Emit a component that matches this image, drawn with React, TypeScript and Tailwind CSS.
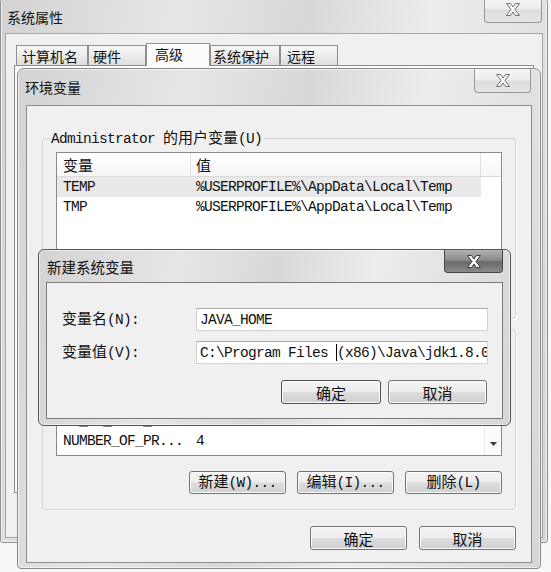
import React from "react";

const CJK = "font-['Noto_Sans_CJK_SC',sans-serif] text-[15px] leading-[13px]";
const LAT = "font-['Liberation_Mono','Noto_Sans_CJK_SC',monospace] text-[14.5px] tracking-[-0.7px] leading-[16px]";
const TITLE = "font-['Noto_Sans_CJK_SC',sans-serif] leading-[16px] text-[#111]";
const FRAME =
  "bg-[linear-gradient(100deg,#d3d3d3_0%,#e6e6e6_28%,#d8d8d8_48%,#ededed_68%,#d6d6d6_100%)] shadow-[inset_0_0_0_1px_rgba(255,255,255,0.55)]";
const BTN =
  "flex items-center justify-center rounded-[3px] border bg-[linear-gradient(180deg,#f4f4f4_0%,#ececec_48%,#dddddd_52%,#d0d0d0_100%)] shadow-[inset_0_0_0_1px_#fbfbfb] text-[#111]";

function M({ s }: { s: string }) {
  const parts = s.split(/([\u3400-\u9fff]+)/).filter((p) => p !== "");
  return (
    <span className="inline-flex items-baseline whitespace-pre">
      {parts.map((p, i) =>
        /[\u3400-\u9fff]/.test(p) ? (
          <span key={i} className={CJK}>
            {p}
          </span>
        ) : (
          <span key={i} className={LAT}>
            {p}
          </span>
        )
      )}
    </span>
  );
}

function XGlyph({ fill, stroke }: { fill: string; stroke: string }) {
  return (
    <svg width="16" height="13" viewBox="0 0 16 13">
      <path
        d="M1.5 0.5h4l2.5 3.5 2.5-3.5h4l-4.5 6 4.5 6h-4l-2.5-3.5-2.5 3.5h-4l4.5-6z"
        fill={fill}
        stroke={stroke}
        strokeWidth="1"
        strokeLinejoin="round"
      />
    </svg>
  );
}

function CloseBtn({ className, active }: { className: string; active?: boolean }) {
  return (
    <div
      className={
        className +
        " flex items-center justify-center rounded-b-[4px] border border-t-0 " +
        (active
          ? "border-[#474747] bg-[linear-gradient(180deg,#b2b2b2_0%,#8c8c8c_45%,#6a6a6a_55%,#8a8a8a_100%)]"
          : "border-[#989898] bg-[linear-gradient(180deg,#f7f7f7_0%,#ebebeb_48%,#dcdcdc_52%,#e6e6e6_100%)]")
      }
    >
      {active ? <XGlyph fill="#ffffff" stroke="#3a3a3a" /> : <XGlyph fill="#fafafa" stroke="#6e6e6e" />}
    </div>
  );
}

function Btn({ s, className, def }: { s: string; className: string; def?: boolean }) {
  return (
    <div className={className + " " + BTN + " " + (def ? "border-[#505050]" : "border-[#727272]")}>
      <M s={s} />
    </div>
  );
}

function Row({ n, v, sel }: { n: string; v: string; sel?: boolean }) {
  return (
    <div className="flex h-[20px] shrink-0">
      <div className={"w-[424px] flex items-center " + (sel ? "bg-[#e9e9e9]" : "")}>
        <div className="w-[134px] pl-[6px] flex items-center overflow-hidden">
          <M s={n} />
        </div>
        <div className="pl-[5px] flex items-center">
          <M s={v} />
        </div>
      </div>
    </div>
  );
}

function Header() {
  return (
    <div className="flex h-[24px] shrink-0 border-b border-[#dadada] bg-[linear-gradient(180deg,#ffffff_0%,#f6f6f6_100%)]">
      <div className="w-[134px] pl-[6px] flex items-center border-r border-[#e2e2e2]">
        <M s="变量" />
      </div>
      <div className="w-[290px] pl-[5px] flex items-center border-r border-[#e2e2e2]">
        <M s="值" />
      </div>
      <div className="flex-1" />
    </div>
  );
}

function Tab({ label, className, sel }: { label: string; className: string; sel?: boolean }) {
  return (
    <div
      className={
        className +
        " flex items-center border border-b-0 border-[#8e8e8e] text-[14px] font-['Noto_Sans_CJK_SC',sans-serif] leading-[16px] text-[#111] " +
        (sel
          ? "relative z-10 h-[23px] -mb-px bg-[#fcfcfc] pb-[2px]"
          : "h-[20px] bg-[linear-gradient(180deg,#f8f8f8_0%,#ececec_50%,#dedede_100%)]")
      }
    >
      {label}
    </div>
  );
}

export default function App() {
  return (
    <div className="relative w-[551px] h-[572px] overflow-hidden bg-[#f7f7f7] text-[#111]">
      {/* 系统属性 */}
      <div className={"absolute left-0 top-[-4px] w-[548px] h-[547px] flex flex-col rounded-t-[7px] rounded-b-[3px] border border-[#8f8f8f] " + FRAME}>
        <div className={"h-[36px] shrink-0 pl-[6px] pt-[12px] text-[14px] " + TITLE}>系统属性</div>
        <CloseBtn className="absolute right-[5px] top-0 w-[58px] h-[26px]" />
        <div className="flex-1 mx-[4px] mb-[4px] border border-[#a6a6a6] bg-[#f0f0f0] pt-[9px]">
          <div className="flex items-end h-[22px] ml-[10px]">
            <Tab label="计算机名" className="w-[72px] pl-[5px]" />
            <Tab label="硬件" className="w-[58px] pl-[4px]" />
            <Tab label="高级" className="w-[64px] pl-[8px]" sel />
            <Tab label="系统保护" className="w-[70px] pl-[2px]" />
            <Tab label="远程" className="w-[58px] pl-[6px]" />
          </div>
          <div className="ml-[8px] w-[520px] h-[428px] border border-[#8e8e8e] bg-[#fbfbfb]" />
        </div>
      </div>

      {/* 环境变量 */}
      <div className={"absolute left-[17px] top-[68px] w-[524px] h-[501px] flex flex-col rounded-t-[7px] rounded-b-[4px] border border-[#8a8a8a] " + FRAME}>
        <div className={"h-[36px] shrink-0 pl-[7px] pt-[10px] text-[14px] " + TITLE}>环境变量</div>
        <CloseBtn className="absolute right-[9px] top-0 w-[57px] h-[24px]" />
        <div className="flex-1 mx-[8px] mb-[5px] border border-[#8e8e8e] bg-[#f0f0f0] flex flex-col pt-[24px] px-[15px]">
          <fieldset className="rounded-[3px] border border-[#d3d3d3] shadow-[1px_1px_0_#ffffff] px-[13px] pt-[6px] pb-[15px]">
            <legend className="flex items-center h-[16px] ml-[-7px] px-[2px]">
              <M s="Administrator 的用户变量(U)" />
            </legend>
            <div className="w-[446px] h-[113px] border border-[#8a8a8a] bg-white flex flex-col overflow-hidden">
              <Header />
              <Row n="TEMP" v="%USERPROFILE%\AppData\Local\Temp" sel />
              <Row n="TMP" v="%USERPROFILE%\AppData\Local\Temp" />
            </div>
            <div className="flex justify-end gap-[11px] mt-[15px]">
              <Btn s="新建(N)..." className="w-[97px] h-[23px]" />
              <Btn s="编辑(E)..." className="w-[97px] h-[23px]" />
              <Btn s="删除(D)" className="w-[97px] h-[23px]" />
            </div>
          </fieldset>

          <fieldset className="mt-[2px] rounded-[3px] border border-[#d3d3d3] shadow-[1px_1px_0_#ffffff] px-[13px] pt-[6px] pb-[15px]">
            <legend className="flex items-center h-[16px] ml-[-7px] px-[2px]">
              <M s="系统变量(S)" />
            </legend>
            <div className="w-[446px] h-[113px] border border-[#8a8a8a] bg-white flex overflow-hidden">
              <div className="flex-1 flex flex-col overflow-hidden">
                <Header />
                <div className="flex-1 overflow-hidden">
                  <div className="mt-[-17px] flex flex-col">
                    <Row n="asl.log" v="Destination=file" />
                    <Row n="classpath" v=".;%JAVA_HOME%\lib" />
                    <Row n="ComSpec" v="C:\Windows\system32\cmd.exe" />
                    <Row n="FP_NO_HOST_C..." v="NO" />
                    <Row n="NUMBER_OF_PR..." v="4" />
                  </div>
                </div>
              </div>
              <div className="w-[17px] shrink-0 flex flex-col justify-end items-center bg-[#fbfbfb] border-l border-[#ececec] pb-[9px]">
                <svg width="7" height="4" viewBox="0 0 7 4">
                  <polygon points="0,0 7,0 3.5,4" fill="#3c3c3c" />
                </svg>
              </div>
            </div>
            <div className="flex justify-end gap-[11px] mt-[15px]">
              <Btn s="新建(W)..." className="w-[97px] h-[23px]" />
              <Btn s="编辑(I)..." className="w-[97px] h-[23px]" />
              <Btn s="删除(L)" className="w-[97px] h-[23px]" />
            </div>
          </fieldset>

          <div className="flex justify-end gap-[12px] mt-[16px]">
            <Btn s="确定" className="w-[97px] h-[24px]" />
            <Btn s="取消" className="w-[97px] h-[24px]" />
          </div>
        </div>
      </div>

      {/* 新建系统变量 */}
      <div className={"absolute left-[38px] top-[249px] w-[473px] h-[177px] flex flex-col rounded-[6px] border border-[#555555] " + FRAME}>
        <div className={"h-[32px] shrink-0 pl-[8px] pt-[9px] text-[14.5px] " + TITLE}>新建系统变量</div>
        <CloseBtn className="absolute right-[7px] top-0 w-[59px] h-[23px]" active />
        <div className="flex-1 mx-[7px] mb-[6px] border border-[#7a7a7a] bg-[#f0f0f0] pt-[25px] pl-[15px] pr-[14px]">
          <div className="grid grid-cols-[134px_292px] gap-y-[10px] items-center">
            <div className="flex items-center">
              <M s="变量名(N):" />
            </div>
            <div className="h-[23px] border border-[#d2d2d2] border-t-[#a8a8a8] bg-white pl-[3px] flex items-center overflow-hidden">
              <M s="JAVA_HOME" />
            </div>
            <div className="flex items-center">
              <M s="变量值(V):" />
            </div>
            <div className="h-[23px] border border-[#d2d2d2] border-t-[#a8a8a8] bg-white pl-[3px] flex items-center overflow-hidden whitespace-nowrap">
              <M s="C:\Program Files " />
              <span className="inline-block w-px h-[17px] bg-black shrink-0" />
              <M s="(x86)\Java\jdk1.8.0_121" />
            </div>
          </div>
          <div className="flex justify-end gap-[7px] mt-[16px] pr-[1px]">
            <Btn s="确定" className="w-[100px] h-[24px]" def />
            <Btn s="取消" className="w-[99px] h-[24px]" />
          </div>
        </div>
      </div>
    </div>
  );
}
